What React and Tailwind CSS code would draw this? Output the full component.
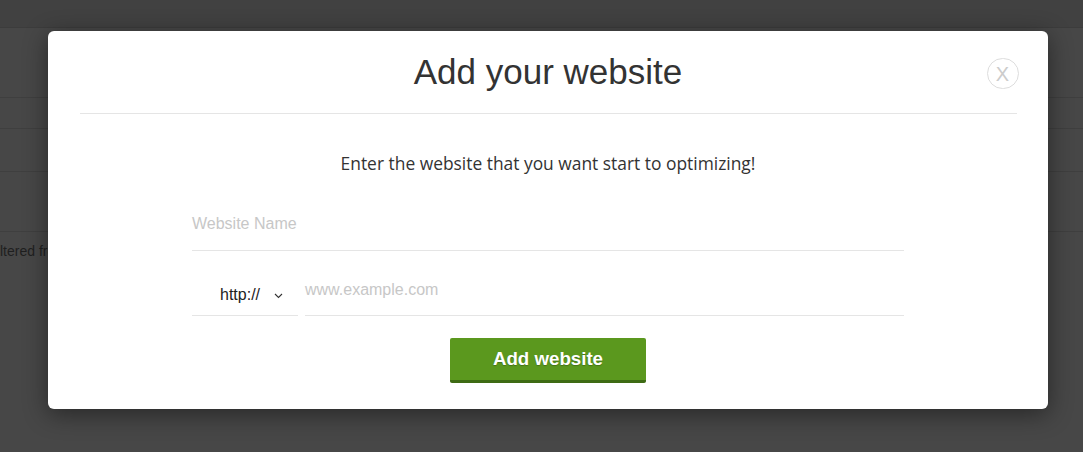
import React from "react";

export default function App() {
  return (
    <div className="relative w-[1083px] h-[452px] overflow-hidden bg-[#474747]" style={{ fontFamily: "Arial, 'Liberation Sans', sans-serif" }}>
      {/* dimmed page behind */}
      <div className="flex flex-col">
        <div className="h-[28px] bg-[#414141] border-b border-[#3c3c3c]" />
        <div className="h-[70px] border-b border-[#3f3f3f]" />
        <div className="h-[31px] border-b border-[#3f3f3f]" />
        <div className="h-[43px] border-b border-[#3f3f3f]" />
        <div className="h-[60px] border-b border-[#3f3f3f]" />
        <div className="h-[36px] pt-[2px] flex items-center text-[14px] text-[#1f1f1f] font-['Liberation_Sans',Arial,sans-serif]">ltered from 120 total entries</div>
      </div>

      {/* modal */}
      <div className="absolute left-[48px] top-[31px] w-[1000px] h-[378px] bg-white rounded-[6px] shadow-[0_5px_25px_rgba(0,0,0,0.45)] flex flex-col items-center">
        <div className="relative w-[937px] h-[83px] border-b border-[#e5e5e5] flex items-center justify-center">
          <h1 className="text-[35px] text-[#333333] font-['Liberation_Sans',Arial,sans-serif] leading-none mt-[-2px]">Add your website</h1>
          <button className="absolute right-[-2px] top-[27px] w-[32px] h-[31px] rounded-full border border-[#dddddd] flex items-center justify-center text-[20px] text-[#cccccc] font-['Liberation_Sans',Arial,sans-serif] leading-none">X</button>
        </div>

        <p className="mt-[37px] text-[17.4px] leading-[24px] text-[#333333] font-['Open_Sans',sans-serif]">Enter the website that you want start to optimizing!</p>

        <div className="mt-[26px] w-[712px] h-[50px] border-b border-[#e5e5e5] flex items-center pb-[4px] text-[16px] text-[#c7c7c7] font-['Liberation_Sans',Arial,sans-serif]">Website Name</div>

        <div className="mt-[15px] w-[712px] flex gap-[7px]">
          <div className="w-[106px] h-[50px] border-b border-[#e5e5e5] flex items-center pl-[28px] gap-[14px] pt-[8px] text-[16px] text-[#222222] font-['Liberation_Sans',Arial,sans-serif]">
            <span>http://</span>
            <svg width="9" height="6" viewBox="0 0 9 6" fill="none" className="mt-[2px]">
              <path d="M1 1l3.5 3.5L8 1" stroke="#333" strokeWidth="1.1" />
            </svg>
          </div>
          <div className="flex-1 h-[50px] border-b border-[#e5e5e5] flex items-center pb-[2px] text-[16px] text-[#c7c7c7] font-['Liberation_Sans',Arial,sans-serif]">www.example.com</div>
        </div>

        <button className="mt-[22px] w-[196px] h-[45px] bg-[#5b981e] border-b-[3px] border-[#3e6b14] rounded-[2px] text-white text-[18.7px] font-bold font-['Liberation_Sans',Arial,sans-serif] [text-shadow:0_1px_1px_rgba(0,0,0,0.25)]">Add website</button>
      </div>
    </div>
  );
}
